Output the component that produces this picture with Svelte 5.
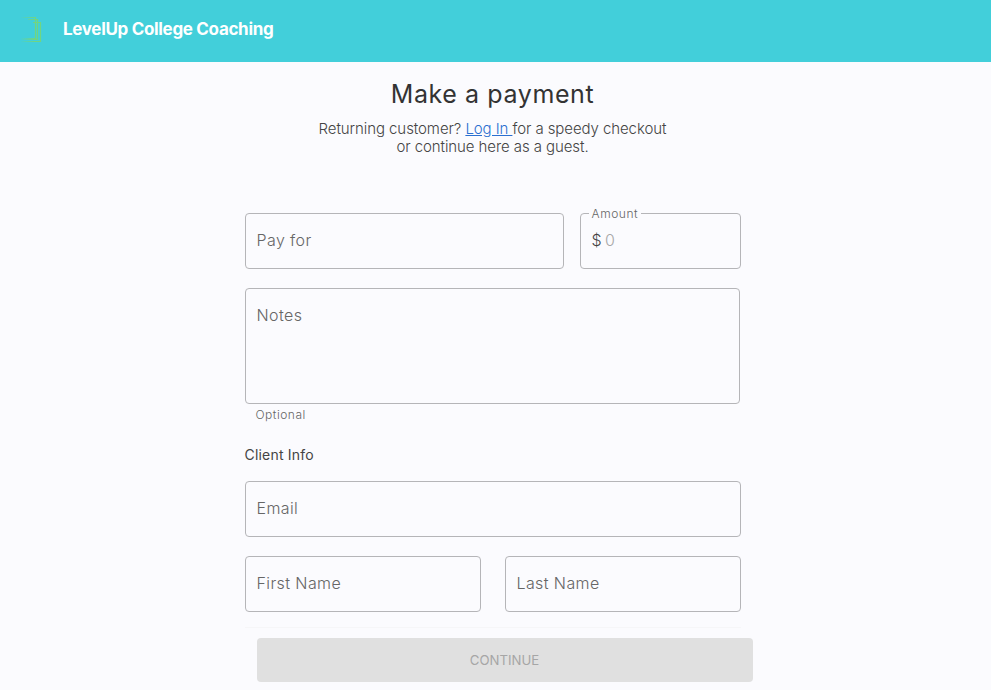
<script lang="ts">
	let payFor = $state('');
	let amount = $state('');
	let notes = $state('');
	let email = $state('');
	let firstName = $state('');
	let lastName = $state('');
</script>

<header class="topbar">
	<svg class="logo" width="24" height="28" viewBox="0 0 24 28" fill="none" aria-hidden="true">
		<defs>
			<linearGradient id="fade" gradientUnits="userSpaceOnUse" x1="0" y1="0" x2="15" y2="0">
				<stop offset="0" stop-color="#72d580" stop-opacity="0" />
				<stop offset="1" stop-color="#72d580" />
			</linearGradient>
		</defs>
		<path d="M1 2.5H15.5V23.5H1" stroke="url(#fade)" stroke-width="1.2" />
		<path d="M8 4.5H17.5V24.5H1" stroke="url(#fade)" stroke-width="1.2" />
		<path d="M13 7.5H20.5V26.5H1" stroke="url(#fade)" stroke-width="1.2" />
	</svg>
	<span class="brand">LevelUp College Coaching</span>
</header>

<main class="page">
	<h1>Make a payment</h1>
	<p class="intro">
		Returning customer? <a href="#login">Log In&nbsp;</a>for a speedy checkout<br />
		or continue here as a guest.
	</p>

	<form class="form" onsubmit={(e) => e.preventDefault()}>
		<div class="row pay-row">
			<input class="field" type="text" placeholder="Pay for" bind:value={payFor} />
			<div class="field amount">
				<span class="legend">Amount</span>
				<span class="currency">$</span>
				<input type="text" placeholder="0" bind:value={amount} />
			</div>
		</div>

		<textarea class="field notes" placeholder="Notes" bind:value={notes}></textarea>
		<div class="hint">Optional</div>

		<div class="section-label">Client Info</div>
		<input class="field" type="email" placeholder="Email" bind:value={email} />
		<div class="row name-row">
			<input class="field" type="text" placeholder="First Name" bind:value={firstName} />
			<input class="field" type="text" placeholder="Last Name" bind:value={lastName} />
		</div>

		<div class="actions">
			<button type="submit" disabled>CONTINUE</button>
		</div>
	</form>
</main>

<style>
	:global(body) {
		margin: 0;
		background: #fbfbfe;
		font-family: Inter, "Liberation Sans", sans-serif;
		color: #333;
	}

	.topbar {
		height: 62px;
		background: #42cfda;
		display: flex;
		align-items: center;
		padding: 0 0 4px 20px;
		gap: 19px;
		box-sizing: border-box;
	}

	.logo {
		flex-shrink: 0;
	}

	.brand {
		color: white;
		font-size: 17px;
		font-weight: 700;
		letter-spacing: -0.32px;
	}

	.page {
		display: flex;
		flex-direction: column;
		align-items: center;
		padding-right: 6px;
	}

	h1 {
		margin: 16px 0 0;
		font-size: 25px;
		line-height: 32px;
		font-weight: 400;
		letter-spacing: 0.6px;
		color: #333;
		text-align: center;
	}

	.intro {
		margin: 10px 0 0;
		font-size: 15px;
		line-height: 18px;
		letter-spacing: -0.08px;
		color: #444;
		text-align: center;
		font-weight: 300;
	}

	.intro a {
		color: #2a6fd0;
	}

	.form {
		width: 496px;
		margin-top: 57px;
		display: flex;
		flex-direction: column;
	}

	.row {
		display: grid;
		gap: 16px;
	}

	.pay-row {
		grid-template-columns: 319px 161px;
	}

	.name-row {
		grid-template-columns: 236px 236px;
		gap: 24px;
		margin-top: 19px;
	}

	.field {
		box-sizing: border-box;
		height: 56px;
		width: 100%;
		border: 1px solid #b5b5b8;
		border-radius: 4px;
		background: transparent;
		padding: 0 11px 2px;
		font-family: inherit;
		font-size: 16px;
		font-weight: 300;
		letter-spacing: 0.4px;
		color: #333;
		outline: none;
	}

	.field::placeholder {
		color: #666;
		opacity: 1;
	}

	.amount {
		position: relative;
		display: flex;
		align-items: center;
		gap: 3px;
	}

	.amount input {
		flex: 1;
		min-width: 0;
		border: 0;
		background: transparent;
		padding: 0;
		font-family: inherit;
		font-size: 16px;
		font-weight: 300;
		outline: none;
	}

	.amount input::placeholder {
		color: #a8a8a8;
		opacity: 1;
	}

	.legend {
		position: absolute;
		top: -7px;
		left: 8px;
		padding: 0 3px;
		background: #fbfbfe;
		font-size: 12px;
		line-height: 14px;
		letter-spacing: 0.55px;
		font-weight: 300;
		color: #666;
	}

	.currency {
		color: #444;
	}

	.notes {
		display: block;
		margin-top: 19px;
		height: 116px;
		width: 495px;
		padding-top: 16px;
		resize: none;
	}

	.hint {
		margin: 3px 0 0 11px;
		font-size: 12px;
		line-height: 16px;
		letter-spacing: 0.5px;
		font-weight: 300;
		color: #666;
	}

	.section-label {
		margin: 23px 0 17px;
		font-size: 14px;
		line-height: 18px;
		letter-spacing: 0.2px;
		color: #444;
	}

	.actions {
		margin-top: 15px;
		border-top: 1px solid #f6f6f8;
		padding: 10px 0 0 12px;
	}

	button {
		display: block;
		width: 496px;
		height: 44px;
		border: 0;
		border-radius: 4px;
		background: #e0e0e0;
		color: #a6a6a6;
		font-family: inherit;
		font-size: 13.2px;
	}
</style>
